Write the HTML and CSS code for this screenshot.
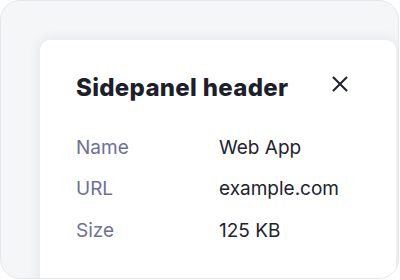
FILE: index.html
```html
<!DOCTYPE html>
<html>
<head>
<meta charset="utf-8">
<link rel="stylesheet" href="styles.css">
</head>
<body>
<div class="frame">
  <div class="panel">
    <div class="panel-header">
      <h2 class="title">Sidepanel header</h2>
      <button class="close" aria-label="Close">
        <svg width="18" height="18" viewBox="0 0 18 18" fill="none" stroke="#1f2030" stroke-width="2" stroke-linecap="round">
          <path d="M2.5 2.5L15.5 15.5M15.5 2.5L2.5 15.5"/>
        </svg>
      </button>
    </div>
    <dl class="props">
      <dt>Name</dt><dd>Web App</dd>
      <dt>URL</dt><dd>example.com</dd>
      <dt>Size</dt><dd>125 KB</dd>
    </dl>
  </div>
</div>
</body>
</html>
```
FILE: styles.css
```css
html, body {
  margin: 0;
  background: #ffffff;
}
.frame {
  box-sizing: border-box;
  width: 399px;
  height: 279px;
  border: 1px solid #e5e6eb;
  border-radius: 20px;
  background: #f5f6f8;
  overflow: hidden;
  padding: 39px 2px 0 39px;
}
.panel {
  box-sizing: border-box;
  height: 300px;
  background: #ffffff;
  border-radius: 10px 10px 0 0;
  box-shadow: 0 0 14px rgba(30, 32, 60, 0.09);
  padding: 32px 36px 0 36px;
  font-family: Inter, "Noto Sans", sans-serif;
}
.panel-header {
  display: flex;
  align-items: flex-start;
  justify-content: space-between;
}
.title {
  margin: 0;
  font-size: 24px;
  line-height: 32px;
  font-weight: 800;
  letter-spacing: 0.3px;
  color: #1e1f2b;
}
.close {
  width: 28px;
  height: 28px;
  margin: -2px 6px 0 0;
  padding: 0;
  border: 0;
  background: none;
  display: flex;
  align-items: center;
  justify-content: center;
}
.props {
  margin: 31.5px 0 0 0;
  display: grid;
  grid-template-columns: 143px 1fr;
  row-gap: 17.5px;
  font-size: 19px;
  line-height: 24px;
}
.props dt {
  color: #6c7095;
}
.props dd {
  margin: 0;
  color: #23232f;
}
```
